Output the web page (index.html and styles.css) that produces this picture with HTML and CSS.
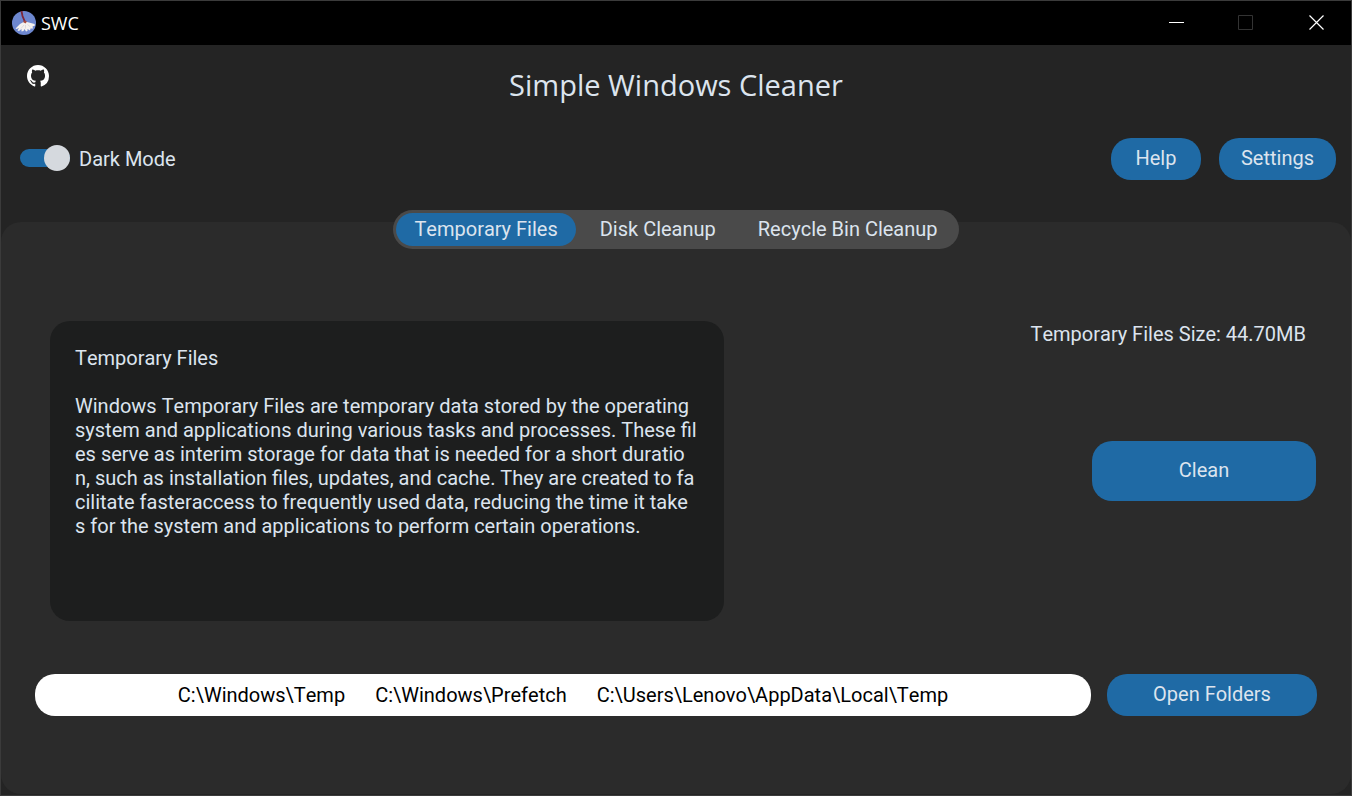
FILE: index.html
```html
<!DOCTYPE html>
<html lang="en">
<head>
<meta charset="utf-8">
<title>SWC</title>
<link rel="stylesheet" href="styles.css">
</head>
<body>
<div class="window">
  <header class="titlebar">
    <svg class="app-icon" viewBox="0 0 24 24" aria-hidden="true">
      <circle cx="12" cy="12" r="12" fill="#6d87cf"/>
      <path d="M11.500 11L8 13L3.500 17.500L4.500 18L7 17L5.500 19.500L7 20L9.500 18L9.500 20.500L11.500 20L12.500 18L14 20.500L15.500 20L15.500 18L18 19.500L18.500 17.500L21 17.500L20.500 15.500L23 14.500L22.500 13L15 11Z" fill="#f5f2ef"/>
      <path d="M12 14L9 17.500M13.500 14L13.500 17.500M15.500 13.500L18.500 16" stroke="#cbc6ca" stroke-width="0.500"/>
      <path d="M9.500 0L10.500 5L13 11" fill="none" stroke="#7d2637" stroke-width="1.800"/>
      <path d="M11 11L12.500 9.500L15 10.500L13.500 12.500Z" fill="#a84a3c"/>
    </svg>
    <span class="app-name">SWC</span>
    <div class="window-controls">
      <button class="control" type="button" aria-label="Minimize"><svg viewBox="0 0 16 16"><path d="M1 7.500H16" stroke="#fff"/></svg></button>
      <button class="control" type="button" aria-label="Maximize" disabled><svg viewBox="0 0 16 16"><path d="M0.500 0.500H14.500V14.500H0.500Z" fill="none" stroke="#333"/></svg></button>
      <button class="control" type="button" aria-label="Close"><svg viewBox="0 0 16 16"><path d="M1.500 0.500L15.500 14.500M15.500 0.500L1.500 14.500" stroke="#fff" stroke-width="1.200"/></svg></button>
    </div>
  </header>
  <main class="content">
    <div class="heading">
      <a class="github" href="#" aria-label="GitHub"><svg viewBox="0 0 16 16"><path fill="#fff" d="M8 0C3.580 0 0 3.580 0 8c0 3.540 2.290 6.530 5.470 7.590.4.070.55-.17.55-.38 0-.19-.01-.82-.01-1.490-2.010.37-2.530-.49-2.690-.94-.09-.23-.48-.94-.82-1.130-.28-.15-.68-.52-.01-.53.63-.01 1.080.58 1.230.82.72 1.210 1.870.87 2.330.66.070-.52.28-.87.51-1.070-1.780-.2-3.640-.89-3.640-3.950 0-.87.31-1.590.82-2.150-.08-.2-.36-1.020.08-2.120 0 0 .67-.21 2.200.82.64-.18 1.320-.27 2-.27s1.360.09 2 .27c1.530-1.040 2.200-.82 2.200-.82.44 1.100.16 1.920.08 2.120.51.56.82 1.270.82 2.150 0 3.070-1.870 3.750-3.650 3.950.29.25.54.73.54 1.480 0 1.070-.01 1.930-.01 2.200 0 .21.15.46.55.38A8.010 8.010 0 0 0 16 8c0-4.420-3.580-8-8-8z"/></svg></a>
      <h1 class="title">Simple Windows Cleaner</h1>
    </div>
    <div class="toolbar">
      <label class="switch"><input class="switch-input" type="checkbox" role="switch" checked>Dark Mode</label>
      <div class="toolbar-actions">
        <button class="button" type="button">Help</button>
        <button class="button" type="button">Settings</button>
      </div>
    </div>
    <section class="panel">
      <div class="tabs" role="tablist">
        <button class="tab tab-active" type="button" role="tab" aria-selected="true">Temporary Files</button>
        <button class="tab" type="button" role="tab" aria-selected="false">Disk Cleanup</button>
        <button class="tab" type="button" role="tab" aria-selected="false">Recycle Bin Cleanup</button>
      </div>
      <div class="details">
        <textarea class="description" aria-label="Description" readonly>Temporary Files

Windows Temporary Files are temporary data stored by the operating
system and applications during various tasks and processes. These fil
es serve as interim storage for data that is needed for a short duratio
n, such as installation files, updates, and cache. They are created to fa
cilitate fasteraccess to frequently used data, reducing the time it take
s for the system and applications to perform certain operations.</textarea>
        <div class="summary">
          <p class="size">Temporary Files Size: 44.70MB</p>
          <button class="button clean" type="button">Clean</button>
        </div>
      </div>
      <div class="folders">
        <div class="paths"><span>C:\Windows\Temp</span><span>C:\Windows\Prefetch</span><span>C:\Users\Lenovo\AppData\Local\Temp</span></div>
        <button class="button open-folders" type="button">Open Folders</button>
      </div>
    </section>
  </main>
</div>
</body>
</html>
```
FILE: styles.css
```css
* {
  box-sizing: border-box;
}

body {
  margin: 0;
  background: #242424;
  color: #dce4ee;
  font: 20px/24px Roboto, sans-serif;
  font-kerning: none;
}

button,
textarea {
  border: 0;
  color: inherit;
  font: inherit;
  font-kerning: none;
}

.window {
  display: flex;
  flex-direction: column;
  min-height: 100vh;
  border: 1px solid #3b3b3b;
}

.titlebar {
  display: flex;
  align-items: center;
  height: 44px;
  padding-left: 11px;
  gap: 5px;
  background: #000;
  color: #fff;
}

.app-icon {
  width: 24px;
  height: 24px;
}

.app-name {
  font: 18px/24px "Open Sans", "Noto Sans", sans-serif;
}

.window-controls {
  display: flex;
  align-self: stretch;
  margin-left: auto;
}

.control {
  display: flex;
  align-items: center;
  justify-content: center;
  width: 70px;
  padding: 0;
  background: none;
}

.control svg {
  width: 16px;
  height: 16px;
}

.content {
  display: flex;
  flex: 1;
  flex-direction: column;
}

.heading {
  display: grid;
  grid-template-columns: 1fr auto 1fr;
  align-items: start;
  padding: 20px 26px 0;
}

.github svg {
  display: block;
  width: 22px;
  height: 22px;
}

.title {
  margin: 0;
  font: 29px/40px "Open Sans", "Noto Sans", sans-serif;
}

.toolbar {
  display: flex;
  align-items: center;
  justify-content: space-between;
  padding: 33px 15px 42px 19px;
}

.switch {
  display: flex;
  align-items: center;
  gap: 9px;
}

.switch-input {
  appearance: none;
  display: flex;
  align-items: center;
  justify-content: flex-end;
  width: 50px;
  height: 18px;
  margin: 0 0 2px;
  border-radius: 9px;
  background: #1f6aa5;
}

.switch-input::before {
  content: "";
  width: 26px;
  height: 26px;
  flex: none;
  border-radius: 50%;
  background: #d5d9de;
}

.switch-input:not(:checked) {
  justify-content: flex-start;
  background: #4a4d50;
}

.toolbar-actions {
  display: flex;
  gap: 18px;
}

.button {
  min-width: 90px;
  min-height: 42px;
  padding: 0 22px 2px;
  border-radius: 20px;
  background: #1f6aa5;
}

.panel {
  display: flex;
  flex: 1;
  flex-direction: column;
  margin-bottom: 1px;
  border-radius: 20px;
  background: #2b2b2b;
}

.tabs {
  display: flex;
  align-self: center;
  gap: 6px;
  margin-top: -12px;
  padding: 3px;
  border-radius: 20px;
  background: #4a4a4a;
}

.tab {
  height: 33px;
  padding: 0 18px 1px;
  border-radius: 17px;
  background: none;
}

.tab-active {
  background: #1f6aa5;
}

.details {
  display: flex;
  justify-content: space-between;
  margin: 72px 35px 0 49px;
}

.description {
  width: 674px;
  height: 300px;
  padding: 25px;
  border-radius: 20px;
  background: #1d1e1e;
  white-space: pre;
  overflow: hidden;
  resize: none;
  outline: 0;
}

.summary {
  display: flex;
  flex-direction: column;
  align-items: flex-end;
}

.size {
  margin: 1px 10px 95px;
}

.clean {
  width: 224px;
  height: 60px;
}

.folders {
  display: flex;
  gap: 16px;
  margin: 53px 34px 0;
}

.paths {
  display: flex;
  flex: 1;
  flex-wrap: wrap;
  align-items: center;
  justify-content: center;
  gap: 0 30px;
  border-radius: 20px;
  background: #fff;
  color: #000;
}

.open-folders {
  width: 210px;
}
```
